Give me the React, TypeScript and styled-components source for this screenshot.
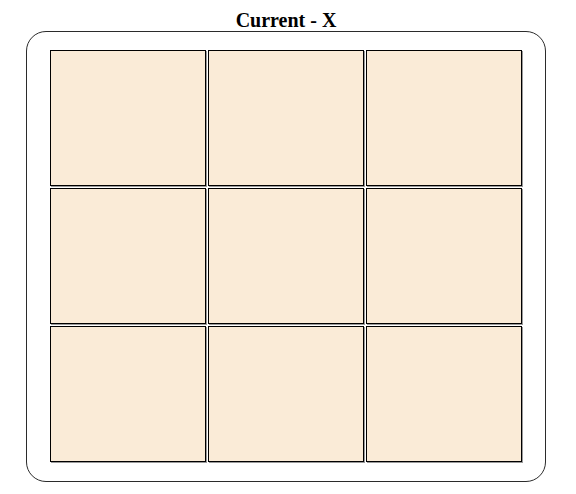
import React from "react";
import styled, { createGlobalStyle } from "styled-components";

const Global = createGlobalStyle`
  html, body { margin: 0; padding: 0; background: #ffffff; }
  body { font-family: "Liberation Serif", "Times New Roman", serif; }
`;

const Page = styled.div`
  display: flex;
  flex-direction: column;
  align-items: center;
  width: 520px;
  padding: 9px 0 0 26px;
`;

const Title = styled.h1`
  margin: 0;
  font-size: 20px;
  font-weight: bold;
  line-height: 22px;
  color: #000;
`;

const Board = styled.div`
  box-sizing: border-box;
  width: 520px;
  border: 1px solid #2b2b2b;
  border-radius: 20px;
  padding: 18px 22px 19px 23px;
`;

const Grid = styled.div`
  display: grid;
  grid-template-columns: repeat(3, 156px);
  grid-auto-rows: 136px;
  gap: 2px;
`;

const Cell = styled.button`
  box-sizing: border-box;
  margin: 0;
  padding: 0;
  border: 1px solid #000;
  box-shadow: 1px 1px 0 #9a9a9a;
  background: #faebd7;
  font-family: "Liberation Serif", serif;
  font-size: 48px;
  font-weight: bold;
  cursor: pointer;
`;

export default function App() {
  const cells = Array.from({ length: 9 }, (_, i) => i);
  return (
    <>
      <Global />
      <Page>
        <Title>Current - X</Title>
        <Board>
          <Grid>
            {cells.map((i) => (
              <Cell key={i} aria-label={`cell ${i + 1}`} />
            ))}
          </Grid>
        </Board>
      </Page>
    </>
  );
}
